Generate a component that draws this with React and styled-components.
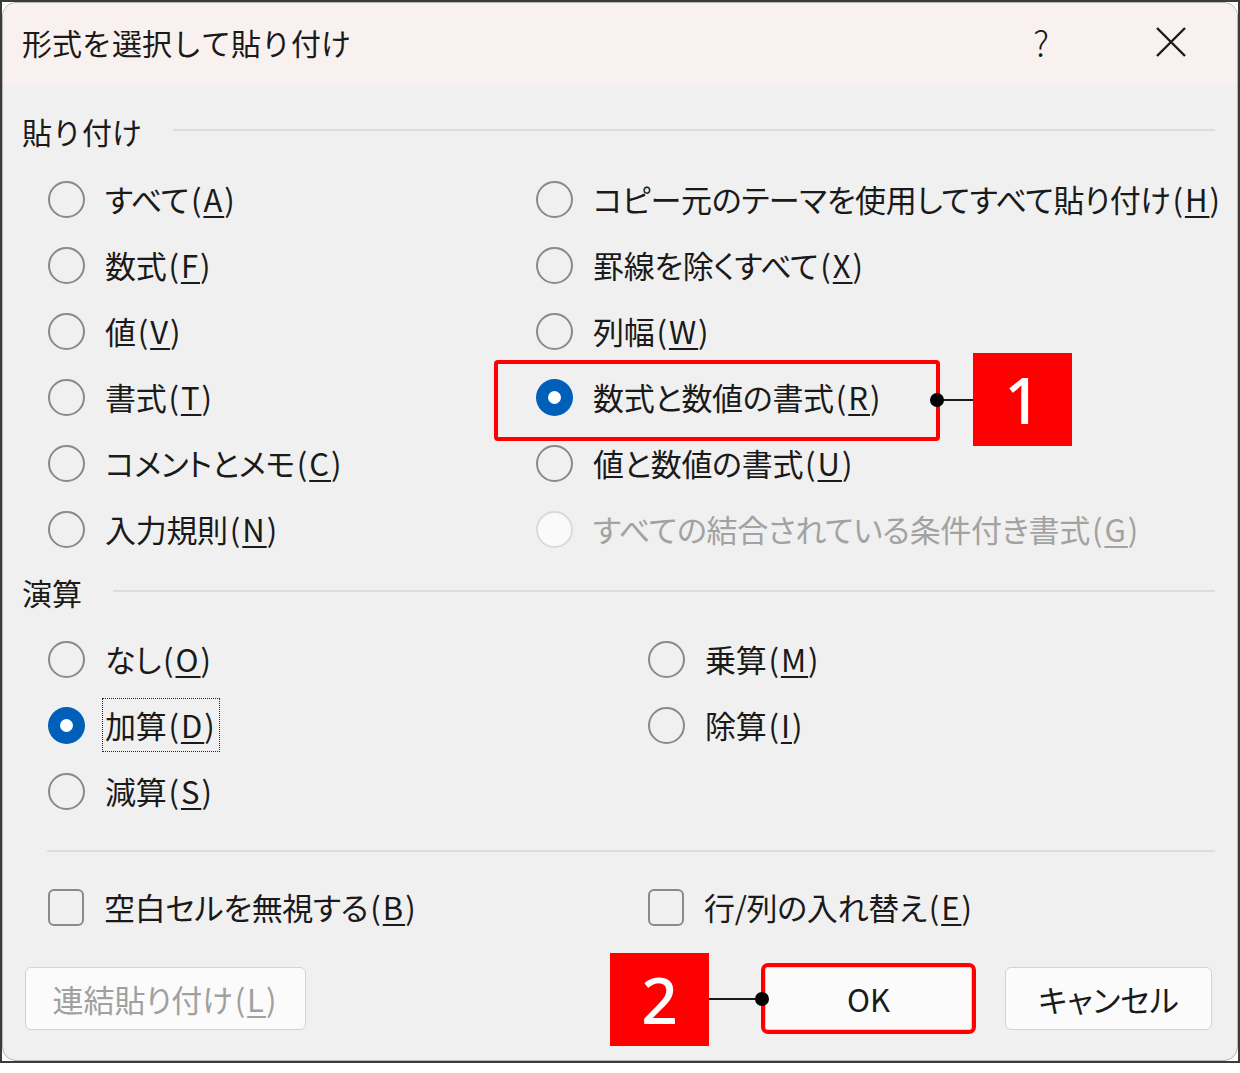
import React from "react";
import styled, { createGlobalStyle, css } from "styled-components";

const GlobalStyle = createGlobalStyle`
  html, body {
    margin: 0;
    padding: 0;
    background: #ffffff;
  }
  body {
    font-family: "Noto Sans CJK JP", "Noto Sans", sans-serif;
    color: #1a1a1a;
  }
`;

const pasteOptions = [
  [{ text: "すべて", key: "A" }, { text: "コピー元のテーマを使用してすべて貼り付け", key: "H" }],
  [{ text: "数式", key: "F" }, { text: "罫線を除くすべて", key: "X" }],
  [{ text: "値", key: "V" }, { text: "列幅", key: "W" }],
  [{ text: "書式", key: "T" }, { text: "数式と数値の書式", key: "R", checked: true }],
  [{ text: "コメントとメモ", key: "C" }, { text: "値と数値の書式", key: "U" }],
  [{ text: "入力規則", key: "N" }, { text: "すべての結合されている条件付き書式", key: "G", disabled: true }],
];

const operationOptions = [
  [{ text: "なし", key: "O" }, { text: "乗算", key: "M" }],
  [{ text: "加算", key: "D", checked: true, focused: true }, { text: "除算", key: "I" }],
  [{ text: "減算", key: "S" }, null],
];

// 外枠（スクリーンショットの枠線）
const Frame = styled.div`
  position: relative;
  width: 1240px;
  height: 1063px;
  box-sizing: border-box;
  border: 2px solid #3b3b3b;
  background: #ffffff;
`;

const Dialog = styled.div`
  height: 100%;
  box-sizing: border-box;
  border: 1px solid #b5b5b5;
  border-radius: 14px;
  overflow: hidden;
  background: #f0f0f0;
  display: flex;
  flex-direction: column;
`;

const TitleBar = styled.div`
  height: 82px;
  flex: none;
  display: flex;
  align-items: center;
  padding: 0 50px 4px 19px;
  box-sizing: border-box;
  background: #f8f1ef;
`;

const Title = styled.div`
  flex: 1;
  font-size: 30px;
  line-height: 40px;
`;

const Help = styled.span`
  font-size: 35px;
  font-weight: 300;
  line-height: 40px;
  margin-right: 106px;
`;

const Body = styled.div`
  flex: 1;
  display: flex;
  flex-direction: column;
  padding: 0 22px 0 19px;
`;

const SectionHeader = styled.div`
  display: flex;
  align-items: center;
  gap: 31px;
  margin-top: ${p => p.$top}px;
  font-size: 30px;
  line-height: 40px;

  &::after {
    content: "";
    flex: 1;
    height: 2px;
    background: #dddddd;
    margin-top: -2px;
  }
`;

const OptionGrid = styled.div`
  display: grid;
  grid-template-columns: ${p => p.$col}px 1fr;
  grid-auto-rows: 66px;
  margin-top: ${p => p.$top}px;
  padding-left: 26px;
`;

const Option = styled.div`
  display: flex;
  align-items: center;
  gap: 19px;
  font-size: 31px;
  font-feature-settings: "palt";
  letter-spacing: -0.3px;
  color: ${p => (p.$disabled ? "#a2a2a2" : "#1a1a1a")};
  white-space: nowrap;
`;

const Label = styled.span`
  line-height: 52px;
  padding: 0 2px;
  margin-left: -2px;
  border: 1px dotted ${p => (p.$focused ? "#2a2a2a" : "transparent")};
`;

// アクセスキー部分 "(A)"
const Accel = styled.span`
  letter-spacing: 2px;
  padding-left: 2px;
`;

const Key = styled.u`
  text-decoration-thickness: 2px;
  text-underline-offset: 4px;
`;

const Radio = styled.span`
  flex: none;
  width: 37px;
  height: 37px;
  box-sizing: border-box;
  border-radius: 50%;
  border: 2px solid #8a8a8a;
  display: flex;
  align-items: center;
  justify-content: center;

  ${p =>
    p.$disabled &&
    css`
      border-color: #dadada;
      background: #fafafa;
    `}

  ${p =>
    p.$checked &&
    css`
      border: none;
      background: #005fb8;
      &::after {
        content: "";
        width: 13px;
        height: 13px;
        border-radius: 50%;
        background: #ffffff;
      }
    `}
`;

const Check = styled.span`
  flex: none;
  width: 36px;
  height: 37px;
  box-sizing: border-box;
  border-radius: 6px;
  border: 2px solid #8a8a8a;
`;

const Separator = styled.div`
  height: 2px;
  background: #dddddd;
  margin: 26px 0 0 25px;
`;

const CheckRow = styled.div`
  display: grid;
  grid-template-columns: 600px 1fr;
  height: 66px;
  margin-top: 22px;
  padding-left: 26px;
`;

const ButtonRow = styled.div`
  display: flex;
  justify-content: space-between;
  margin: 27px 3px 0 3px;
`;

const ButtonGroup = styled.div`
  display: flex;
  gap: 33px;
`;

const Button = styled.div`
  width: ${p => p.$w}px;
  height: 63px;
  box-sizing: border-box;
  display: flex;
  align-items: center;
  justify-content: center;
  border: 1px solid #d3d3d3;
  border-radius: 6px;
  background: #fbfbfb;
  font-size: 31px;
  font-feature-settings: "palt";
  color: ${p => (p.$disabled ? "#a0a0a0" : "#1a1a1a")};

  ${p =>
    p.$marked &&
    css`
      outline: 4px solid #ff0000;
      outline-offset: 0;
      border-radius: 3px;
    `}
`;

// 注釈（赤枠・番号・引き出し線）
const Highlight = styled.div`
  position: absolute;
  left: ${p => p.$x}px;
  top: ${p => p.$y}px;
  width: ${p => p.$w}px;
  height: ${p => p.$h}px;
  box-sizing: border-box;
  border: 4px solid #ff0000;
  border-radius: 4px;
`;

const Badge = styled.div`
  position: absolute;
  left: ${p => p.$x}px;
  top: ${p => p.$y}px;
  width: 99px;
  height: 93px;
  background: #ff0000;
  color: #ffffff;
  display: flex;
  align-items: center;
  justify-content: center;
  font-family: "Noto Sans", "Liberation Sans", sans-serif;
  font-size: 64px;
  font-weight: 500;
`;

const Leader = styled.div`
  position: absolute;
  left: ${p => p.$x}px;
  top: ${p => p.$y - 1}px;
  width: ${p => p.$w}px;
  height: 2px;
  background: #1a1a1a;

  &::before {
    content: "";
    position: absolute;
    top: -6px;
    ${p => p.$dot}: -7px;
    width: 14px;
    height: 14px;
    border-radius: 50%;
    background: #000000;
  }
`;

function CloseIcon() {
  return (
    <svg width="32" height="32" viewBox="0 0 32 32">
      <path d="M2 2 L30 30 M30 2 L2 30" stroke="#1a1a1a" strokeWidth="2.4" fill="none" />
    </svg>
  );
}

function AccelKey({ k }) {
  return (
    <Accel>
      (<Key>{k}</Key>)
    </Accel>
  );
}

function RadioOption({ opt }) {
  if (!opt) return <div />;
  return (
    <Option $disabled={opt.disabled}>
      <Radio $checked={opt.checked} $disabled={opt.disabled} />
      <Label $focused={opt.focused}>
        {opt.text}
        <AccelKey k={opt.key} />
      </Label>
    </Option>
  );
}

function CheckOption({ text, k }) {
  return (
    <Option>
      <Check />
      <Label>
        {text}
        <AccelKey k={k} />
      </Label>
    </Option>
  );
}

export default function App() {
  return (
    <>
      <GlobalStyle />
      <Frame>
        <Dialog>
          <TitleBar>
            <Title>形式を選択して貼り付け</Title>
            <Help>?</Help>
            <CloseIcon />
          </TitleBar>
          <Body>
            <SectionHeader $top={26}>貼り付け</SectionHeader>
            <OptionGrid $col={488} $top={15}>
              {pasteOptions.map((row, i) =>
                row.map((opt, j) => <RadioOption key={`${i}-${j}`} opt={opt} />)
              )}
            </OptionGrid>

            <SectionHeader $top={10}>演算</SectionHeader>
            <OptionGrid $col={600} $top={14}>
              {operationOptions.map((row, i) =>
                row.map((opt, j) => <RadioOption key={`${i}-${j}`} opt={opt} />)
              )}
            </OptionGrid>

            <Separator />

            <CheckRow>
              <CheckOption text="空白セルを無視する" k="B" />
              <CheckOption text="行/列の入れ替え" k="E" />
            </CheckRow>

            <ButtonRow>
              <Button $w={281} $disabled>
                連結貼り付け
                <AccelKey k="L" />
              </Button>
              <ButtonGroup>
                <Button $w={207} $marked>OK</Button>
                <Button $w={207}>キャンセル</Button>
              </ButtonGroup>
            </ButtonRow>
          </Body>
        </Dialog>

        <Highlight $x={492} $y={358} $w={446} $h={81} />
        <Leader $x={935} $y={398} $w={36} $dot="left" />
        <Badge $x={971} $y={351}>1</Badge>

        <Badge $x={608} $y={951}>2</Badge>
        <Leader $x={707} $y={997} $w={53} $dot="right" />
      </Frame>
    </>
  );
}
